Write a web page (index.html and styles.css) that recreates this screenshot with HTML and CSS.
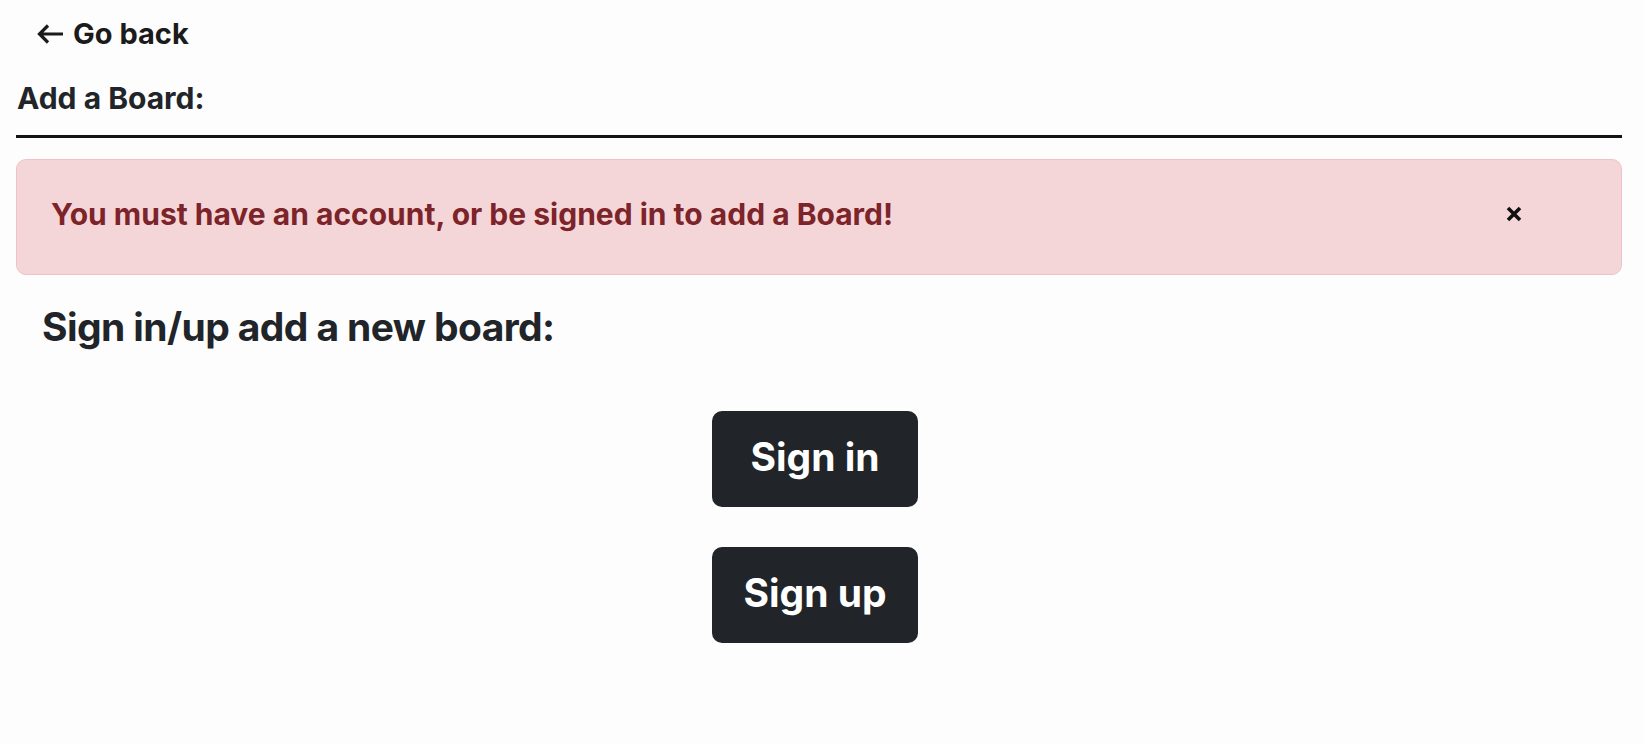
FILE: index.html
```html
<!DOCTYPE html>
<html lang="en">
<head>
<meta charset="utf-8">
<title>Add a Board</title>
<link rel="stylesheet" href="styles.css">
</head>
<body>
<div class="page">
  <a class="back" href="#">
    <svg class="back-icon" width="27" height="20" viewBox="0 0 27 20" aria-hidden="true"><path d="M27 10H3.5M12 1.5L3.5 10L12 18.5" fill="none" stroke="#1b1b1b" stroke-width="3.2"/></svg>
    <span>Go back</span>
  </a>
  <h2 class="title">Add a Board:</h2>
  <hr class="rule">
  <div class="alert">
    <span class="alert-text">You must have an account, or be signed in to add a Board!</span>
    <button class="close" type="button" aria-label="Close">
      <svg width="16" height="16" viewBox="0 0 16 16" aria-hidden="true"><path d="M2 2L14 14M14 2L2 14" fill="none" stroke="#111" stroke-width="3.6"/></svg>
    </button>
  </div>
  <h3 class="prompt">Sign in/up add a new board:</h3>
  <div class="actions">
    <a class="btn" href="#">Sign in</a>
    <a class="btn" href="#">Sign up</a>
  </div>
</div>
</body>
</html>
```
FILE: styles.css
```css
html, body {
  margin: 0;
  padding: 0;
  background: #fdfdfd;
}
body {
  font-family: Inter, "Open Sans", sans-serif;
  color: #212529;
}
.page {
  display: flex;
  flex-direction: column;
  padding: 16px 22px 40px 16px;
}
.back {
  display: flex;
  align-items: center;
  gap: 10px;
  margin-left: 20px;
  height: 36px;
  font-size: 29px;
  line-height: 36px;
  font-weight: 700;
  color: #1b1b1b;
  text-decoration: none;
}
.back-icon {
  display: block;
  flex: none;
}
.title {
  margin: 28px 0 0 1px;
  font-size: 30px;
  line-height: 36px;
  font-weight: 700;
}
.rule {
  margin: 19px 0 0 0;
  border: 0;
  height: 3px;
  background: #141414;
}
.alert {
  margin-top: 21px;
  height: 116px;
  box-sizing: border-box;
  display: flex;
  align-items: center;
  padding: 0 0 0 34px;
  background: #f4d6d9;
  border: 1px solid #efc2c6;
  border-radius: 10px;
  color: #7c2429;
}
.alert-text {
  flex: 1;
  font-size: 30px;
  font-weight: 700;
  line-height: 36px;
  padding-bottom: 6px;
}
.close {
  flex: none;
  margin-right: 99px;
  margin-top: -6px;
  padding: 0;
  border: 0;
  background: none;
  width: 16px;
  height: 16px;
  display: flex;
}
.prompt {
  margin: 27px 0 0 26px;
  font-size: 39px;
  letter-spacing: -0.6px;
  line-height: 50px;
  font-weight: 700;
}
.actions {
  margin-top: 59px;
  display: flex;
  flex-direction: column;
  align-items: center;
  gap: 40px;
  padding-right: 8px;
}
.btn {
  width: 206px;
  height: 96px;
  box-sizing: border-box;
  display: flex;
  align-items: center;
  justify-content: center;
  background: #212529;
  border-radius: 10px;
  color: #fff;
  font-size: 39px;
  font-weight: 700;
  text-decoration: none;
  padding-bottom: 5px;
}
```
